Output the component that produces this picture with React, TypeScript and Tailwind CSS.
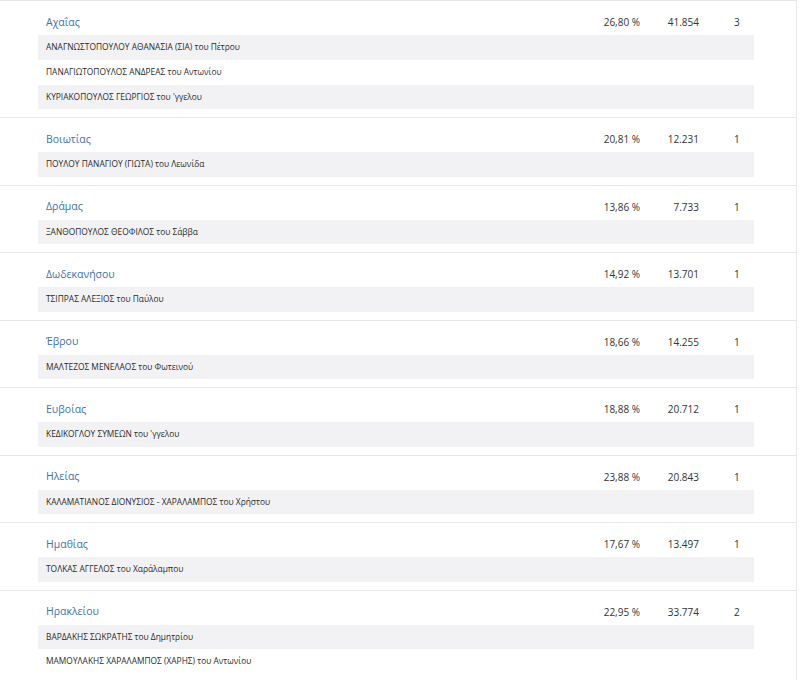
import * as React from "react";

interface Region {
  name: string;
  percent: string;
  votes: string;
  seats: number;
  members: string[];
}

const regions: Region[] = [
  {
    name: "Αχαΐας",
    percent: "26,80 %",
    votes: "41.854",
    seats: 3,
    members: [
      "ΑΝΑΓΝΩΣΤΟΠΟΥΛΟΥ ΑΘΑΝΑΣΙΑ (ΣΙΑ) του Πέτρου",
      "ΠΑΝΑΓΙΩΤΟΠΟΥΛΟΣ ΑΝΔΡΕΑΣ του Αντωνίου",
      "ΚΥΡΙΑΚΟΠΟΥΛΟΣ ΓΕΩΡΓΙΟΣ του 'γγελου",
    ],
  },
  {
    name: "Βοιωτίας",
    percent: "20,81 %",
    votes: "12.231",
    seats: 1,
    members: ["ΠΟΥΛΟΥ ΠΑΝΑΓΙΟΥ (ΓΙΩΤΑ) του Λεωνίδα"],
  },
  {
    name: "Δράμας",
    percent: "13,86 %",
    votes: "7.733",
    seats: 1,
    members: ["ΞΑΝΘΟΠΟΥΛΟΣ ΘΕΟΦΙΛΟΣ του Σάββα"],
  },
  {
    name: "Δωδεκανήσου",
    percent: "14,92 %",
    votes: "13.701",
    seats: 1,
    members: ["ΤΣΙΠΡΑΣ ΑΛΕΞΙΟΣ του Παύλου"],
  },
  {
    name: "Έβρου",
    percent: "18,66 %",
    votes: "14.255",
    seats: 1,
    members: ["ΜΑΛΤΕΖΟΣ ΜΕΝΕΛΑΟΣ του Φωτεινού"],
  },
  {
    name: "Ευβοίας",
    percent: "18,88 %",
    votes: "20.712",
    seats: 1,
    members: ["ΚΕΔΙΚΟΓΛΟΥ ΣΥΜΕΩΝ του 'γγελου"],
  },
  {
    name: "Ηλείας",
    percent: "23,88 %",
    votes: "20.843",
    seats: 1,
    members: ["ΚΑΛΑΜΑΤΙΑΝΟΣ ΔΙΟΝΥΣΙΟΣ - ΧΑΡΑΛΑΜΠΟΣ του Χρήστου"],
  },
  {
    name: "Ημαθίας",
    percent: "17,67 %",
    votes: "13.497",
    seats: 1,
    members: ["ΤΟΛΚΑΣ ΑΓΓΕΛΟΣ του Χαράλαμπου"],
  },
  {
    name: "Ηρακλείου",
    percent: "22,95 %",
    votes: "33.774",
    seats: 2,
    members: [
      "ΒΑΡΔΑΚΗΣ ΣΩΚΡΑΤΗΣ του Δημητρίου",
      "ΜΑΜΟΥΛΑΚΗΣ ΧΑΡΑΛΑΜΠΟΣ (ΧΑΡΗΣ) του Αντωνίου",
    ],
  },
];

const App: React.FC = () => {
  return (
    <div className="w-screen h-screen overflow-hidden bg-white font-['Open_Sans','Liberation_Sans',sans-serif]">
      <div className="w-[797px] border-r border-[#e6e6e6]">
        {regions.map((region) => (
          <div
            key={region.name}
            className="border-t border-[#e6e6e6] pt-[10.5px] pb-[7.75px] pl-[38px] pr-[42px]"
          >
            <div className="flex items-center h-[22px] mb-[1.5px] text-[10px] text-[#333]">
              <span className="flex-1 pl-2 text-[10.5px] text-[#3f72a9]">
                {region.name}
              </span>
              <span className="w-[70px] text-right">{region.percent}</span>
              <span className="w-[59px] text-right">{region.votes}</span>
              <span className="ml-[35px] w-[20px]">{region.seats}</span>
            </div>
            {region.members.map((member, index) => (
              <div
                key={index}
                className={`flex items-center h-[24.75px] pl-2 text-[8.4px] text-[#2b2b2b] ${
                  index % 2 === 0 ? "bg-[#f2f2f4]" : "bg-white"
                }`}
              >
                {member}
              </div>
            ))}
          </div>
        ))}
      </div>
    </div>
  );
};

export default App;
